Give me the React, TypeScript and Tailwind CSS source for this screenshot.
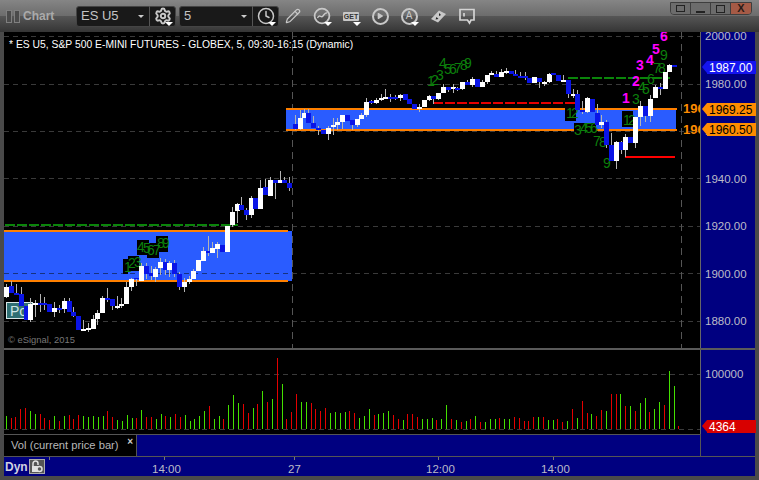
import { Clock, Pencil, Play, Settings } from "lucide-react";

const FONT = "[font-family:'Liberation_Sans',Arial,sans-serif]";
const UP = "#ffffff";
const DOWN = "#0a14e6";

// x, bodyTop, bodyBottom, wickTop, wickBottom, white?
type Candle = [number, number, number, number, number, number];

const candles: Candle[] = [
  [6, 287, 297, 284, 298, 1], [11, 286, 293, 281, 293, 0], [16, 293, 295, 284, 295, 0], [21, 294, 306, 287, 306, 0],
  [26, 306, 320, 306, 320, 0], [30, 304, 320, 298, 322, 1], [35, 303, 305, 300, 317, 1], [40, 303, 305, 294, 312, 0],
  [44, 303, 305, 297, 310, 0], [49, 304, 312, 304, 312, 0], [54, 308, 312, 302, 317, 1], [59, 308, 310, 305, 313, 0],
  [64, 301, 309, 298, 313, 1], [69, 301, 312, 298, 312, 0], [73, 312, 316, 307, 317, 0], [78, 316, 330, 316, 330, 0],
  [83, 329, 331, 320, 331, 1], [88, 328, 330, 323, 332, 1], [93, 319, 329, 315, 329, 1], [97, 313, 319, 310, 325, 1],
  [102, 298, 313, 296, 313, 1], [107, 298, 300, 288, 302, 0], [112, 299, 306, 299, 310, 0], [117, 306, 308, 296, 309, 1],
  [121, 304, 306, 298, 308, 1], [126, 287, 304, 282, 304, 1], [131, 279, 287, 278, 291, 1], [136, 278, 279, 278, 286, 0],
  [141, 266, 281, 263, 281, 1], [146, 266, 274, 263, 279, 0], [151, 273, 276, 266, 280, 0], [155, 269, 277, 267, 282, 1],
  [160, 262, 268, 258, 275, 1], [165, 262, 270, 259, 275, 0], [169, 263, 270, 261, 277, 1], [174, 263, 274, 260, 277, 0],
  [179, 274, 287, 272, 290, 0], [184, 282, 287, 278, 292, 1], [189, 279, 282, 276, 284, 1], [193, 271, 279, 269, 279, 1],
  [198, 260, 271, 260, 271, 1], [203, 251, 261, 247, 261, 1], [208, 251, 253, 236, 256, 0], [212, 248, 253, 242, 253, 1],
  [217, 244, 249, 242, 258, 1], [222, 245, 252, 245, 252, 0], [227, 226, 252, 226, 252, 1], [232, 212, 225, 207, 227, 1],
  [237, 204, 211, 203, 223, 1], [241, 205, 210, 197, 210, 0], [246, 210, 215, 208, 220, 0], [251, 198, 215, 196, 218, 1],
  [255, 198, 209, 198, 209, 0], [260, 188, 209, 180, 209, 1], [265, 187, 195, 179, 195, 0], [270, 180, 196, 177, 196, 1],
  [275, 180, 183, 180, 199, 0], [280, 180, 183, 171, 183, 1], [284, 180, 183, 177, 183, 0], [289, 183, 188, 177, 191, 0],
  [295, 124, 129, 115, 130, 0], [300, 118, 129, 110, 130, 1], [304, 113, 118, 109, 118, 1], [308, 113, 123, 109, 123, 0],
  [313, 123, 128, 116, 128, 0], [318, 128, 130, 126, 135, 0], [323, 130, 134, 130, 134, 0], [328, 128, 134, 126, 140, 1],
  [333, 125, 127, 118, 135, 1], [337, 122, 125, 118, 130, 1], [342, 115, 122, 115, 129, 1], [347, 115, 121, 115, 121, 0],
  [352, 120, 125, 120, 130, 0], [357, 119, 125, 119, 127, 1], [361, 115, 119, 113, 119, 1], [366, 102, 115, 98, 117, 1],
  [371, 101, 103, 100, 104, 0], [376, 100, 103, 98, 104, 1], [381, 98, 100, 94, 101, 1], [385, 97, 99, 89, 99, 1],
  [390, 97, 99, 94, 102, 0], [395, 97, 99, 95, 100, 0], [400, 95, 98, 94, 101, 1], [405, 94, 100, 94, 100, 0],
  [409, 99, 104, 99, 104, 0], [414, 104, 109, 104, 109, 0], [419, 107, 109, 104, 112, 1], [424, 100, 107, 100, 107, 1],
  [429, 96, 100, 95, 101, 1], [433, 96, 99, 96, 104, 0], [438, 93, 99, 93, 100, 1], [443, 87, 93, 84, 93, 1],
  [448, 87, 90, 87, 92, 0], [453, 87, 89, 84, 93, 1], [457, 88, 90, 87, 91, 0], [462, 82, 89, 82, 90, 1],
  [467, 82, 85, 80, 85, 0], [472, 79, 85, 77, 87, 1], [477, 79, 87, 79, 87, 0], [482, 82, 87, 80, 87, 1],
  [487, 75, 82, 75, 84, 1], [491, 73, 75, 71, 75, 1], [496, 74, 77, 71, 77, 0], [501, 72, 77, 69, 77, 1],
  [506, 71, 73, 68, 74, 1], [511, 71, 74, 71, 74, 0], [515, 74, 76, 70, 76, 0], [520, 76, 78, 72, 78, 0],
  [525, 76, 78, 72, 80, 0], [529, 78, 83, 78, 83, 0], [534, 77, 83, 77, 83, 1], [539, 78, 82, 78, 88, 0],
  [544, 82, 84, 81, 86, 1], [549, 74, 82, 73, 83, 1], [553, 73, 75, 73, 75, 0], [558, 75, 81, 75, 81, 0],
  [563, 80, 82, 75, 82, 1], [568, 80, 94, 80, 98, 0], [573, 94, 96, 89, 98, 1], [577, 94, 110, 90, 110, 0],
  [582, 110, 112, 101, 114, 0], [587, 98, 112, 97, 113, 1], [592, 99, 112, 99, 112, 0], [597, 113, 125, 104, 125, 0],
  [601, 122, 125, 115, 128, 1], [606, 122, 145, 120, 148, 0], [611, 145, 161, 133, 161, 0], [616, 142, 161, 141, 169, 1],
  [621, 142, 150, 141, 154, 0], [625, 137, 150, 134, 157, 1], [630, 137, 143, 137, 143, 0], [635, 117, 143, 117, 148, 1],
  [640, 106, 117, 101, 126, 1], [645, 106, 116, 106, 122, 0], [650, 99, 116, 95, 122, 1], [655, 87, 98, 85, 98, 1],
  [660, 87, 89, 83, 95, 0], [665, 72, 89, 72, 89, 1], [669, 65, 72, 64, 72, 1], [674, 65, 67, 65, 67, 0],
];

// top of each volume bar in the 3x crop, r = red, g = green
const volumeTops: [number, "r" | "g"][] = [
  [213, "g"], [219, "r"], [216, "r"], [192, "r"], [189, "r"], [198, "g"], [207, "g"], [207, "r"], [219, "r"], [225, "r"],
  [213, "g"], [228, "r"], [213, "g"], [210, "r"], [222, "r"], [210, "r"], [213, "g"], [216, "g"], [213, "g"], [216, "g"],
  [213, "g"], [198, "r"], [216, "r"], [225, "g"], [228, "g"], [210, "g"], [219, "g"], [219, "r"], [195, "g"], [216, "r"],
  [216, "r"], [222, "g"], [207, "g"], [213, "r"], [216, "g"], [207, "r"], [216, "r"], [210, "g"], [228, "g"], [222, "g"],
  [213, "g"], [198, "g"], [183, "r"], [222, "g"], [213, "g"], [222, "r"], [180, "g"], [150, "g"], [174, "g"], [177, "r"],
  [204, "r"], [189, "g"], [177, "r"], [138, "g"], [171, "r"], [162, "g"], [39, "r"], [117, "g"], [222, "r"], [201, "r"],
  [147, "r"], [171, "g"], [171, "g"], [174, "r"], [192, "r"], [198, "r"], [189, "r"], [204, "g"], [201, "g"], [204, "g"],
  [201, "g"], [198, "r"], [204, "r"], [219, "g"], [213, "g"], [192, "g"], [210, "r"], [207, "g"], [204, "g"], [198, "g"],
  [210, "r"], [222, "r"], [225, "g"], [207, "r"], [207, "r"], [216, "r"], [222, "g"], [222, "g"], [219, "g"], [225, "r"],
  [222, "g"], [180, "g"], [222, "r"], [225, "g"], [231, "r"], [228, "g"], [222, "r"], [213, "g"], [231, "r"], [231, "g"],
  [222, "g"], [222, "g"], [219, "r"], [222, "g"], [222, "g"], [216, "r"], [219, "r"], [228, "r"], [228, "r"], [216, "r"],
  [216, "g"], [216, "r"], [225, "g"], [225, "g"], [222, "r"], [231, "r"], [228, "g"], [192, "r"], [219, "g"], [168, "r"],
  [204, "r"], [207, "g"], [213, "r"], [195, "r"], [198, "g"], [147, "r"], [147, "r"], [147, "g"], [183, "r"], [183, "g"],
  [198, "r"], [174, "g"], [159, "g"], [201, "r"], [192, "g"], [171, "g"], [180, "r"], [78, "g"], [123, "g"], [243, "r"],
];

const gridLines = [36, 84, 131, 178, 226, 273, 321];

const setupDigits: [string, number, number][] = [
  ["1", 124, 272], ["2", 128, 268], ["3", 134, 267], ["4", 137, 252], ["5", 143, 253], ["6", 147, 255], ["7", 153, 255],
  ["8", 157, 248], ["9", 162, 248],
  ["1", 427, 86], ["2", 431, 85], ["3", 436, 80], ["4", 439, 68], ["5", 444, 74], ["6", 449, 74], ["7", 454, 73],
  ["8", 460, 70], ["9", 464, 68],
  ["1", 566, 118], ["2", 571, 118], ["3", 574, 135], ["4", 580, 133], ["5", 585, 133], ["6", 590, 133],
  ["7", 593, 146], ["8", 599, 147], ["9", 603, 168],
  ["1", 623, 125], ["2", 628, 125], ["3", 632, 104], ["4", 638, 92], ["5", 642, 94], ["6", 647, 84],
  ["7", 653, 73], ["8", 658, 73], ["9", 660, 60],
];

const setupBoxes: [number, number, number, number][] = [
  [123, 259, 5, 15], [128, 256, 11, 15], [137, 240, 12, 15], [147, 243, 12, 15], [156, 236, 12, 16],
  [565, 107, 11, 14], [574, 123, 22, 10], [622, 111, 11, 16],
];

const countdown: [string, number, number][] = [
  ["1", 622, 103], ["2", 632, 86], ["3", 636, 70], ["4", 646, 65], ["5", 652, 54], ["6", 660, 41],
];

function Caret() {
  return <span className="absolute bottom-0 right-0 h-0 w-0 border-x-[4px] border-t-[4px] border-x-transparent border-t-white" />;
}

function ToolIcon({ children, caret = false }: { children: React.ReactNode; caret?: boolean }) {
  return (
    <span className="relative flex h-[20px] w-[20px] items-center justify-center text-[#c8c8c8]">
      {children}
      {caret && <Caret />}
    </span>
  );
}

function Combo({ value, width }: { value: string; width: string }) {
  return (
    <div className={`flex h-[20px] ${width} items-center justify-between border-r border-[#555] pl-[4px] pr-[5px] text-[13px] text-[#c4c4c4]`}>
      <span>{value}</span>
      <span className="h-0 w-0 border-x-[3px] border-t-[3px] border-x-transparent border-t-[#ccc]" />
    </div>
  );
}

function TitleBar() {
  return (
    <div className="relative flex h-[32px] items-center bg-[linear-gradient(#858585,#6c6c6c_50%,#565656_50%,#353535)] pl-[6px]">
      <span className="flex gap-[2px]">
        <span className="h-[13px] w-[6px] border border-[#7f7f7f] bg-[#4b4b4b]" />
        <span className="h-[13px] w-[6px] border border-[#7f7f7f] bg-[#4b4b4b]" />
      </span>
      <span className="ml-[3px] w-[53px] text-[12px] font-bold text-[#aaaaaa]">Chart</span>
      <div className="flex h-[21px] items-center rounded-[3px] border border-[#444] bg-[#191919]">
        <Combo value="ES U5" width="w-[73px]" />
        <span className="flex w-[25px] justify-center">
          <ToolIcon caret><Settings size={18} strokeWidth={2.6} /></ToolIcon>
        </span>
      </div>
      <div className="ml-[3px] flex h-[21px] items-center rounded-[3px] border border-[#444] bg-[#191919]">
        <Combo value="5" width="w-[73px]" />
        <span className="flex w-[25px] justify-center">
          <ToolIcon caret><Clock size={18} strokeWidth={2} /></ToolIcon>
        </span>
      </div>
      <div className="ml-[4px] flex items-center gap-[9px]">
        <ToolIcon><Pencil size={16} strokeWidth={1.8} /></ToolIcon>
        <ToolIcon caret>
          <svg width="18" height="18" viewBox="0 0 18 18" fill="none" stroke="currentColor" strokeWidth="1.8">
            <circle cx="9" cy="9" r="7.4" />
            <path d="M4.5 11 C6.5 6.5 8 11.5 10 9 S12 5.5 14 6" strokeWidth="1.4" />
          </svg>
        </ToolIcon>
        <ToolIcon caret>
          <span className="rounded-[1px] bg-[#c8c8c8] px-[1px] text-[7px] font-bold leading-[9px] text-[#333]">GET</span>
        </ToolIcon>
        <ToolIcon>
          <span className="flex h-[17px] w-[17px] items-center justify-center rounded-full border-2 border-[#c8c8c8]">
            <Play size={8} fill="currentColor" strokeWidth={0} />
          </span>
        </ToolIcon>
        <ToolIcon caret>
          <span className="flex h-[17px] w-[17px] items-center justify-center rounded-full border-2 border-[#c8c8c8] text-[10px] leading-none">A</span>
        </ToolIcon>
        <ToolIcon>
          <svg width="17" height="17" viewBox="0 0 17 17">
            <path d="M1 11 L9 2.5 L16 6 L8 14.5 Z" fill="#c8c8c8" />
            <path d="M9 5 L11 7 L9 8 Z M6.5 9 L8.5 11 L5.5 11.5 Z" fill="#222" />
          </svg>
        </ToolIcon>
        <ToolIcon>
          <svg width="18" height="18" viewBox="0 0 18 18" fill="none" stroke="#d4d4d4" strokeWidth="1.7">
            <path d="M2 2.5 H16 V13 H13 L11.5 16 L9.5 13 H2 Z" />
            <path d="M6 6 V9.5" />
          </svg>
        </ToolIcon>
      </div>
      <div className="absolute right-[7px] top-[2px] flex h-[13px] overflow-hidden rounded-b-[4px] border border-[#3e3e3e]">
        <span className="flex w-[20px] items-center justify-center border-r border-[#3e3e3e] bg-[#6c6c6c]">
          <span className="h-[7px] w-[9px] border border-[#222]" />
        </span>
        <span className="flex w-[20px] items-end justify-center border-r border-[#3e3e3e] bg-[#6c6c6c] pb-[1px]">
          <span className="h-[2px] w-[9px] bg-[#222]" />
        </span>
        <span className="flex w-[20px] items-center justify-center border-r border-[#3e3e3e] bg-[#6c6c6c]">
          <span className="h-[8px] w-[9px] border border-[#222]" />
        </span>
        <span className="flex w-[20px] items-center justify-center bg-[#a55a46] text-[11px] font-bold leading-none text-[#2a1a16]">X</span>
      </div>
    </div>
  );
}

function PriceChart() {
  return (
    <svg width="696" height="316" viewBox="4 32 696 316" className="block shrink-0 bg-black" shapeRendering="crispEdges">
      {gridLines.map((y) => (
        <line key={y} x1="4" x2="700" y1={y + 0.5} y2={y + 0.5} stroke="#3a3a3a" strokeDasharray="5 4" />
      ))}
      <line x1="292.5" x2="292.5" y1="32" y2="348" stroke="#555" strokeDasharray="7 5" />
      <line x1="681.5" x2="681.5" y1="32" y2="348" stroke="#555" strokeDasharray="7 5" />

      <rect x="4" y="231" width="288" height="50" fill="#2a5cff" />
      <line x1="4" x2="292" y1="273.5" y2="273.5" stroke="#16327f" strokeDasharray="5 4" />
      <rect x="4" y="230" width="284" height="2" fill="#ff8000" />
      <rect x="4" y="280" width="284" height="2" fill="#ff8000" />
      <rect x="286" y="109" width="390" height="21" fill="#2a5cff" />
      <rect x="286" y="108" width="391" height="2" fill="#ff8000" />
      <rect x="286" y="129" width="391" height="2" fill="#ff8000" />

      <line x1="5" x2="238" y1="225" y2="225" stroke="#0a850a" strokeWidth="2" strokeDasharray="10 2" />
      <line x1="568" x2="670" y1="78" y2="78" stroke="#0a850a" strokeWidth="2" strokeDasharray="10 2" />
      <line x1="433" x2="577" y1="103" y2="103" stroke="#e60000" strokeWidth="2" strokeDasharray="10 2" />
      <rect x="625" y="156" width="50" height="2" fill="#ff0000" />

      <g shapeRendering="auto">
        <rect x="6.5" y="302.5" width="26" height="16" fill="#2f6f73" stroke="#d8e6e6" />
        <text x="10" y="316" fontSize="14" fill="#cfe5e5">Po</text>
        <text x="8" y="343" fontSize="9.4" fill="#777">© eSignal, 2015</text>
        <text x="9" y="48" fontSize="10.35" fill="#ffffff">* ES U5, S&amp;P 500 E-MINI FUTURES - GLOBEX, 5, 09:30-16:15 (Dynamic)</text>
        <text x="683" y="113" fontSize="13" fontWeight="700" fill="#ff8c00">196</text>
        <text x="683" y="134" fontSize="13" fontWeight="700" fill="#ff8c00">196</text>
      </g>

      {setupBoxes.map(([x, y, w, h]) => (
        <rect key={`${x}-${y}`} x={x} y={y} width={w} height={h} fill="#000" />
      ))}
      <g shapeRendering="auto">
        {setupDigits.map(([d, x, y], i) => (
          <text key={i} x={x} y={y} fontSize="14" fill="#0c7f0c">{d}</text>
        ))}
      </g>

      {candles.map(([x, top, bottom, wickTop, wickBottom, white]) => (
        <g key={x}>
          <rect x={x} y={wickTop} width="1" height={wickBottom - wickTop} fill="#b4b4b4" />
          <rect x={x - 2} y={top} width="5" height={Math.max(bottom - top, 1)} fill={white ? UP : DOWN} />
        </g>
      ))}

      <g shapeRendering="auto">
        {countdown.map(([d, x, y]) => (
          <text key={d} x={x} y={y} fontSize="14" fontWeight="700" fill="#ff00ff">{d}</text>
        ))}
      </g>
    </svg>
  );
}

function VolumeChart() {
  return (
    <svg width="696" height="84" viewBox="4 350 696 84" className="block shrink-0 bg-black" shapeRendering="crispEdges">
      <line x1="4" x2="700" y1="374.5" y2="374.5" stroke="#3a3a3a" strokeDasharray="5 4" />
      <line x1="4" x2="700" y1="429.5" y2="429.5" stroke="#3a3a3a" strokeDasharray="5 4" />
      {volumeTops.map(([top, color], i) => {
        const y = 345 + top / 3;
        return (
          <rect
            key={i}
            x={Math.round(5.7 + i * 4.84)}
            y={y}
            width="1"
            height={429 - y}
            fill={color === "g" ? "#44e000" : "#e40000"}
          />
        );
      })}
    </svg>
  );
}

function PriceFlag({ label, top, bg, text }: { label: string; top: string; bg: string; text: string }) {
  return (
    <div className={`absolute left-[1px] flex h-[13px] ${top}`}>
      <span className={`h-0 w-0 border-y-[6.5px] border-r-[5px] border-y-transparent ${bg === "blue" ? "border-r-[#1414f0]" : bg === "red" ? "border-r-[#d80000]" : "border-r-[#ff8c00]"}`} />
      <span className={`flex w-[49px] items-center pl-[2px] text-[12px] ${text} ${bg === "blue" ? "bg-[#1414f0]" : bg === "red" ? "bg-[#d80000]" : "bg-[#ff8c00]"}`}>
        {label}
      </span>
    </div>
  );
}

function PriceAxis() {
  const labels = ["2000.00", "1980.00", "1960.00", "1940.00", "1920.00", "1900.00", "1880.00"];
  return (
    <div className="relative h-[316px] w-[55px] border-l border-[#666] bg-[#000080] text-[11.5px] text-[#bcbcc8]">
      <div className="flex flex-col pl-[4px]">
        {labels.map((label) => (
          <span key={label} className="h-[47.5px] leading-[9px]">{label}</span>
        ))}
      </div>
      <PriceFlag label="1987.00" top="top-[29px]" bg="blue" text="text-white" />
      <PriceFlag label="1969.25" top="top-[71px]" bg="orange" text="text-black" />
      <PriceFlag label="1960.50" top="top-[91px]" bg="orange" text="text-black" />
    </div>
  );
}

function VolumeAxis() {
  return (
    <div className="relative h-[84px] w-[55px] border-l border-[#666] bg-[#000080] pl-[4px] pt-[18px] text-[11.5px] leading-[12px] text-[#bcbcc8]">
      <span>100000</span>
      <PriceFlag label="4364" top="top-[70px]" bg="red" text="text-white" />
    </div>
  );
}

export default function App() {
  return (
    <div className={`flex h-[480px] w-[759px] flex-col overflow-hidden bg-[#4a4a4a] ${FONT}`}>
      <TitleBar />
      <div className="flex flex-col px-[4px]">
        <div className="flex">
          <PriceChart />
          <PriceAxis />
        </div>
        <div className="h-[2px] bg-[#5a5a5a]" />
        <div className="flex">
          <VolumeChart />
          <VolumeAxis />
        </div>
        <div className="flex h-[22px] bg-[#000080]">
          <div className="relative flex w-[133px] items-center border-r border-t border-[#555] bg-black pl-[7px] text-[11.2px] text-[#b8b8b8]">
            Vol (current price bar)
            <span className="absolute right-[3px] top-[1px] text-[10px] font-bold leading-[12px] text-[#ccc]">×</span>
          </div>
          <div className="h-full w-[564px] border-r border-t border-[#555]" />
        </div>
        <div className="relative flex h-[20px] items-center border-t border-[#555] bg-[#000080] pl-[1px]">
          <span className="text-[12px] font-bold text-[#d0d0e0]">Dyn</span>
          <span className="ml-[1px] flex h-[15px] w-[16px] items-center justify-center border border-[#aaa] bg-[#555]">
            <svg width="12" height="13" viewBox="0 0 12 13" fill="none" stroke="#e0e0e0" strokeWidth="1.5">
              <path d="M2 6 V3.5 A2.5 2.5 0 0 1 7 3.5 V5" />
              <rect x="1" y="6" width="6" height="6" fill="#e0e0e0" stroke="none" />
              <circle cx="8.5" cy="9" r="2.5" fill="#555" />
            </svg>
          </span>
          <span className="absolute left-[148px] top-[6px] text-[11.5px] leading-[12px] text-[#bcbcc8]">14:00</span>
          <span className="absolute left-[284px] top-[6px] text-[11.5px] leading-[12px] text-[#bcbcc8]">27</span>
          <span className="absolute left-[422px] top-[6px] text-[11.5px] leading-[12px] text-[#bcbcc8]">12:00</span>
          <span className="absolute left-[537px] top-[6px] text-[11.5px] leading-[12px] text-[#bcbcc8]">14:00</span>
          <span className="absolute left-[45px] top-0 h-[3px] w-px bg-[#777]" />
          <span className="absolute left-[160px] top-0 h-[3px] w-px bg-[#777]" />
          <span className="absolute left-[290px] top-0 h-[3px] w-px bg-[#777]" />
          <span className="absolute left-[434px] top-0 h-[3px] w-px bg-[#777]" />
          <span className="absolute left-[549px] top-0 h-[3px] w-px bg-[#777]" />
        </div>
      </div>
    </div>
  );
}
